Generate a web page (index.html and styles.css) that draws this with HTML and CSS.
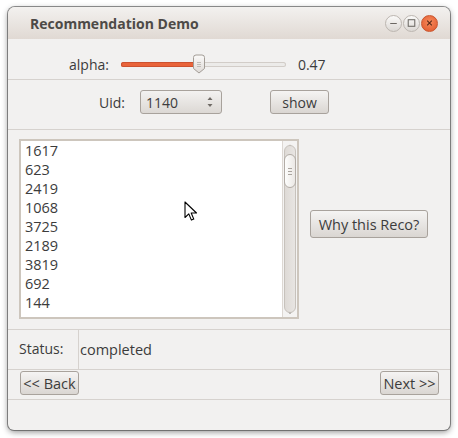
FILE: index.html
```html
<!DOCTYPE html>
<html>
<head>
<meta charset="utf-8">
<link rel="stylesheet" href="styles.css">
</head>
<body>
<div class="window">
  <div class="titlebar">
    <span class="title">Recommendation Demo</span>
    <div class="wbtns">
      <span class="wbtn"><svg width="16" height="16" viewBox="0 0 16 16"><path d="M4.5 8.5h7" stroke="#6b6762" stroke-width="1.2"/></svg></span>
      <span class="wbtn"><svg width="16" height="16" viewBox="0 0 16 16"><rect x="4.5" y="4.5" width="7" height="7" fill="none" stroke="#6b6762" stroke-width="1.1"/></svg></span>
      <span class="wbtn close"><svg width="16" height="16" viewBox="0 0 16 16"><path d="M5.5 5.5l5 5M10.5 5.5l-5 5" stroke="#5a2a18" stroke-width="1.2"/></svg></span>
    </div>
  </div>
  <div class="row alpha">
    <span class="lbl">alpha:</span>
    <div class="slider">
      <div class="track"><div class="fill"></div></div>
      <svg class="handle" width="14" height="20" viewBox="0 0 14 20"><defs><linearGradient id="hg" x1="0" y1="0" x2="0" y2="1"><stop offset="0" stop-color="#fbfaf9"/><stop offset="1" stop-color="#dedad6"/></linearGradient></defs><path d="M1.5 3.5a2.5 2.5 0 0 1 2.5-2.5h6a2.5 2.5 0 0 1 2.5 2.5v11l-5.5 4.5-5.5-4.5z" fill="url(#hg)" stroke="#a39d96"/><path d="M5 8.5h4M5 10.5h4M5 12.5h4" stroke="#b5b0aa" stroke-width="0.8"/></svg>
    </div>
    <span class="val">0.47</span>
  </div>
  <div class="row uid">
    <span class="lbl">Uid:</span>
    <div class="spin"><span>1140</span><svg width="8" height="14" viewBox="0 0 8 14"><path d="M1.5 5l2.5-3 2.5 3z" fill="#6f6a65"/><path d="M1.5 9l2.5 3 2.5-3z" fill="#6f6a65"/></svg></div>
    <button class="btn show">show</button>
  </div>
  <div class="row listarea">
    <div class="listbox">
      <div class="items">
        <div>1617</div><div>623</div><div>2419</div><div>1068</div><div>3725</div><div>2189</div><div>3819</div><div>692</div><div>144</div>
      </div>
      <div class="sbar">
        <svg class="arr" width="14" height="8" viewBox="0 0 14 8"><path d="M5.5 5.5l1.5-2 1.5 2z" fill="#9c9690"/></svg>
        <div class="trough"><div class="thumb"><i></i><i></i><i></i></div></div>
        <svg class="arr" width="14" height="8" viewBox="0 0 14 8"><path d="M5 2.5h4l-2 2.5z" fill="#6f6a65"/></svg>
      </div>
    </div>
    <button class="btn why">Why this Reco?</button>
  </div>
  <div class="row status">
    <div class="scell">Status:</div>
    <div class="sval">completed</div>
  </div>
  <div class="row nav">
    <button class="btn navbtn">&lt;&lt; Back</button>
    <button class="btn navbtn">Next &gt;&gt;</button>
  </div>
  <div class="rest"></div>
</div>
<svg class="cursor" width="14" height="22" viewBox="0 0 14 22"><path d="M1 1v15.5l3.8-3.6 2.6 6.2 2.4-1-2.6-6.1h5.3z" fill="#fff" stroke="#000" stroke-width="1.1" stroke-linejoin="round"/></svg>
</body>
</html>
```
FILE: styles.css
```css
html, body { margin: 0; padding: 0; background: #ffffff; }
body { font-family: "Open Sans", "DejaVu Sans", sans-serif; color: #3c3c3c; font-size: 14px; position: relative; width: 458px; height: 438px; overflow: hidden; }
.window {
  margin: 7px 0 0 8px; width: 442px; height: 423px;
  background: #f2f1f0; border-radius: 7px 7px 6px 6px;
  box-shadow: 0 0 0 1px rgba(60,60,60,0.55), 0 2px 6px rgba(0,0,0,0.45);
  display: flex; flex-direction: column; overflow: hidden;
}
.titlebar {
  height: 32px; flex: none; display: flex; align-items: center; justify-content: space-between;
  padding: 0 12px 0 22px; box-sizing: border-box;
  background: linear-gradient(#f3f1ef, #e0d9d3);
}
.title { font-weight: bold; font-size: 14px; color: #4d4a47; }
.wbtns { display: flex; gap: 1px; }
.wbtn { width: 17px; height: 17px; border-radius: 50%; box-sizing: border-box; border: 1px solid #bcb6b0;
  background: linear-gradient(#fbfaf9, #dcd8d4); display: flex; align-items: center; justify-content: center; }
.wbtn.close { background: radial-gradient(circle at 50% 40%, #f68a5c, #e0562a); border-color: #c9552e; }
.row { flex: none; display: flex; border-bottom: 1px solid #d6d2ce; box-sizing: border-box; }
.alpha { height: 41px; align-items: center; padding: 10px 0 0 61px; }
.alpha .lbl { margin-right: 12px; }
.slider { width: 165px; height: 20px; position: relative; display: flex; align-items: center; }
.track { width: 165px; height: 5px; border-radius: 3px; background: #ecebe9; box-shadow: inset 0 0 0 1px #d2cdc8; position: relative; }
.fill { width: 78px; height: 5px; border-radius: 3px; background: #e9643a; box-shadow: inset 0 0 0 1px #cd5230; }
.handle { position: absolute; left: 71px; top: 0; }
.val { margin-left: 12px; }
.uid { height: 50px; align-items: center; padding: 0 0 5px 91px; }
.uid .lbl { margin-right: 15px; }
.spin { width: 82px; height: 24px; box-sizing: border-box; border: 1px solid #a8a29c; border-radius: 3px;
  background: linear-gradient(#f3f2f1, #dcd8d4); display: flex; align-items: center; justify-content: space-between; padding: 0 7px 0 5px; }
.btn { font-family: inherit; font-size: 14px; color: #3c3c3c; margin: 0; padding: 0; box-sizing: border-box;
  border: 1px solid #a8a29c; border-radius: 3px; background: linear-gradient(#f5f4f3, #dad6d2); height: 24px; }
.show { width: 59px; margin-left: 48px; }
.listarea { height: 200px; padding: 9px 0 0 11px; align-items: flex-start; }
.listbox { width: 280px; height: 180px; box-sizing: border-box; border: 2px solid #cdc6bd; background: #fff; display: flex; }
.items { flex: 1; padding: 0 0 0 4px; line-height: 19px; font-size: 14.5px; }
.sbar { width: 14px; border-left: 1px solid #ddd8d3; background: #f4f3f2; display: flex; flex-direction: column; align-items: center; }
.arr { flex: none; }
.trough { flex: 1; width: 12px; box-sizing: border-box; border: 1px solid #c7c2bc; border-radius: 6px; background: linear-gradient(90deg, #dedad6, #e8e5e2); position: relative; margin: -4px 0; }
.thumb { position: absolute; left: -1px; top: 8px; width: 12px; height: 34px; box-sizing: border-box; border: 1px solid #b2aca6; border-radius: 6px; background: linear-gradient(90deg, #fdfdfc, #ebe8e5); display: flex; flex-direction: column; align-items: center; justify-content: center; gap: 2px; }
.thumb i { display: block; width: 4px; height: 1px; background: #aaa49e; }
.why { width: 118px; height: 28px; margin: 71px 0 0 11px; font-size: 14.5px; }
.status { height: 40px; align-items: stretch; }
.scell { width: 71px; border-right: 1px solid #d6d2ce; padding-left: 11px; box-sizing: border-box; display: flex; align-items: center; padding-bottom: 2px; }
.sval { display: flex; align-items: center; padding-left: 1px; font-size: 14.5px; }
.nav { height: 30px; padding: 1px 11px 0 12px; justify-content: space-between; align-items: flex-start; }
.navbtn { width: 59px; font-size: 14.5px; }
.rest { flex: 1; }
.cursor { position: absolute; left: 184px; top: 201px; }
```
